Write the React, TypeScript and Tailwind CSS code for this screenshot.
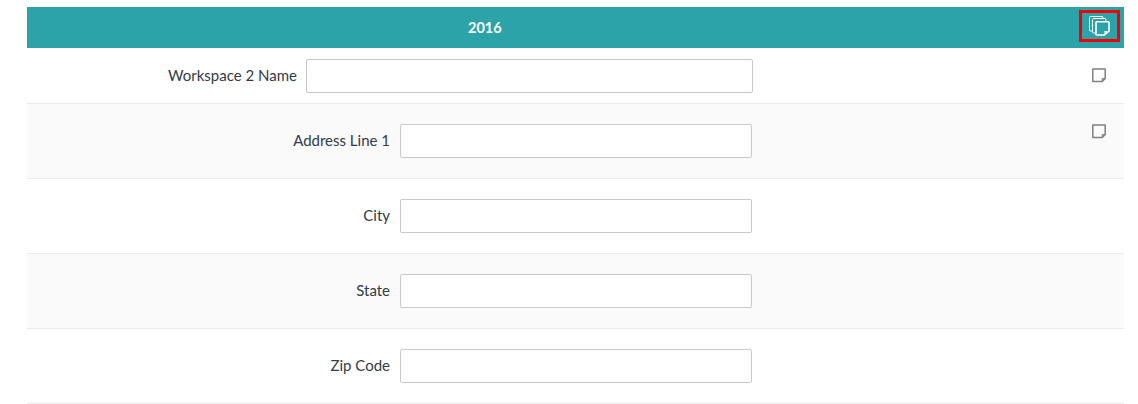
import React from 'react';

function NoteIcon() {
    return (
        <svg width="15" height="15" viewBox="0 0 15 15" fill="none" className="block">
            <path d="M.8 1h12.4v9.4l-3 3H.8z" stroke="#808080" strokeWidth="1.5" strokeLinejoin="round" />
            <path d="M12.9 10.4h-2.7v2.7z" fill="#8c8c8c" stroke="#808080" strokeWidth="0.8" strokeLinejoin="round" />
        </svg>
    );
}

function CopyIcon() {
    return (
        <svg width="21" height="20" viewBox="0 0 21 20" fill="none" className="block">
            <path d="M3 15H1.5a1 1 0 0 1-1-1V1.5a1 1 0 0 1 1-1H13a1 1 0 0 1 1 1V3" stroke="#ffffff" strokeWidth="1" />
            <path d="M6 17H4.5a1 1 0 0 1-1-1V3.5a1 1 0 0 1 1-1H16a1 1 0 0 1 1 1V5" stroke="#ffffff" strokeWidth="1" />
            <path d="M7 6.5a.8.8 0 0 1 .8-.8h11.4a.8.8 0 0 1 .8.8v8.7L15.2 19H7.8a.8.8 0 0 1-.8-.8z" fill="#2ba3a8" stroke="#ffffff" strokeWidth="1.6" strokeLinejoin="round" />
            <path d="M19.5 15h-4v4z" fill="#ffffff" />
        </svg>
    );
}

function FormRow({ label, shaded, note }: { label: string; shaded?: boolean; note?: boolean }) {
    return (
        <div className={`flex h-[75px] border-b border-[#ebebeb] pt-5 ${shaded ? 'bg-[#fafafa]' : 'bg-white'}`}>
            <label className="w-[363px] h-[34px] leading-[33px] text-right text-[15px] text-[#333b47]">{label}</label>
            <input className="ml-[10px] w-[352px] h-[34px] rounded-[2px] border border-[#c8c8c8] bg-white" />
            {note && (
                <div className="ml-auto mr-[17px]">
                    <NoteIcon />
                </div>
            )}
        </div>
    );
}

export default function App() {
    return (
        <div className="min-h-[404px] bg-white pt-[7px] pl-[27px] pr-[14px] overflow-hidden font-['Lato','Liberation_Sans',sans-serif]">
            <div className="flex h-[41px] bg-[#2ba3a8]">
                <span className="ml-[441px] leading-[41px] text-[14.5px] font-bold text-white">2016</span>
                <div className="ml-auto mr-[4px] mt-[3px] flex h-[32px] w-[41px] items-center justify-center border-[3px] border-[#f00000]">
                    <CopyIcon />
                </div>
            </div>

            <div className="flex h-[56px] border-b border-[#ebebeb] bg-white pt-[11px]">
                <label className="w-[270px] h-[34px] leading-[33px] text-right text-[15px] text-[#333b47]">Workspace 2 Name</label>
                <input className="ml-[9px] w-[447px] h-[34px] rounded-[2px] border border-[#c8c8c8] bg-white" />
                <div className="ml-auto mr-[17px] mt-[9px]">
                    <NoteIcon />
                </div>
            </div>

            <FormRow label="Address Line 1" shaded note />
            <FormRow label="City" />
            <FormRow label="State" shaded />
            <FormRow label="Zip Code" />
        </div>
    );
}
